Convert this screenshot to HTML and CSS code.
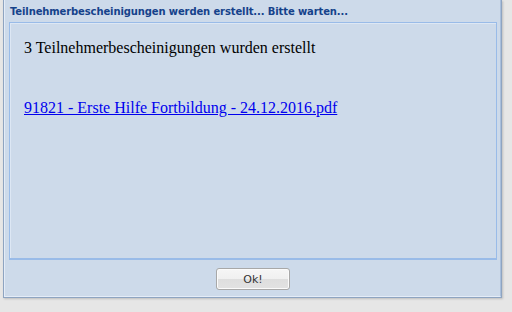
FILE: index.html
```html
<!DOCTYPE html>
<html>
<head>
<meta charset="utf-8">
<link rel="stylesheet" href="styles.css">
</head>
<body>
<div class="win">
  <div class="win-inner">
    <div class="header">Teilnehmerbescheinigungen werden erstellt... Bitte warten...</div>
    <div class="panel">
      <div class="panel-body">
        <p class="msg">3 Teilnehmerbescheinigungen wurden erstellt</p>
        <a class="file" href="#">91821 - Erste Hilfe Fortbildung - 24.12.2016.pdf</a>
      </div>
    </div>
    <div class="footer">
      <button class="btn" type="button">Ok!</button>
    </div>
  </div>
</div>
</body>
</html>
```
FILE: styles.css
```css
html, body {
  margin: 0;
  padding: 0;
}
body {
  background: #e6e6e6;
  width: 512px;
  height: 312px;
  overflow: hidden;
}
.win {
  margin-left: 3px;
  width: 499px;
  height: 298px;
  border: 1px solid #8ea4c1;
  border-top: none;
  background: #cddaea;
  box-shadow: 1px 1px 2px rgba(0,0,0,0.18);
  box-sizing: border-box;
}
.win-inner {
  height: 100%;
  border-left: 1px solid #e4ecf7;
  border-right: 1px solid #a9bfdc;
  border-bottom: 1px solid #e4ecf7;
  box-sizing: border-box;
  display: flex;
  flex-direction: column;
  padding: 0 3px 0 4px;
}
.header {
  height: 22px;
  line-height: 24px;
  padding-left: 1px;
  font-family: "DejaVu Sans", sans-serif;
  font-weight: bold;
  font-size: 10px;
  letter-spacing: -0.12px;
  color: #15428b;
  white-space: nowrap;
}
.panel {
  height: 238px;
  border: 1px solid #99bbe8;
  border-bottom-width: 2px;
  box-sizing: border-box;
  background: #cddaea;
}
.panel-body {
  height: 100%;
  border-left: 1px solid #dde7f4;
  border-top: 1px solid #dde7f4;
  box-sizing: border-box;
  padding: 14px 0 0 13px;
  font-family: "Liberation Serif", serif;
  font-size: 16px;
}
.msg {
  margin: 0;
  line-height: 20px;
  color: #000;
}
.file {
  display: inline-block;
  margin-top: 40px;
  line-height: 20px;
  color: #0000ee;
  text-decoration: underline;
}
.footer {
  flex: 1;
  display: flex;
  justify-content: center;
  align-items: flex-start;
  padding-top: 8px;
}
.btn {
  width: 74px;
  height: 22px;
  padding: 0;
  border: 1px solid #a8a8a8;
  border-radius: 3px;
  background: linear-gradient(#f6f6f6 0, #f0f0f0 50%, #dedede 50%, #e2e2e2 100%);
  font-family: "DejaVu Sans", sans-serif;
  font-size: 11px;
  color: #333;
  box-shadow: inset 0 0 0 1px #fbfbfb;
}
```
